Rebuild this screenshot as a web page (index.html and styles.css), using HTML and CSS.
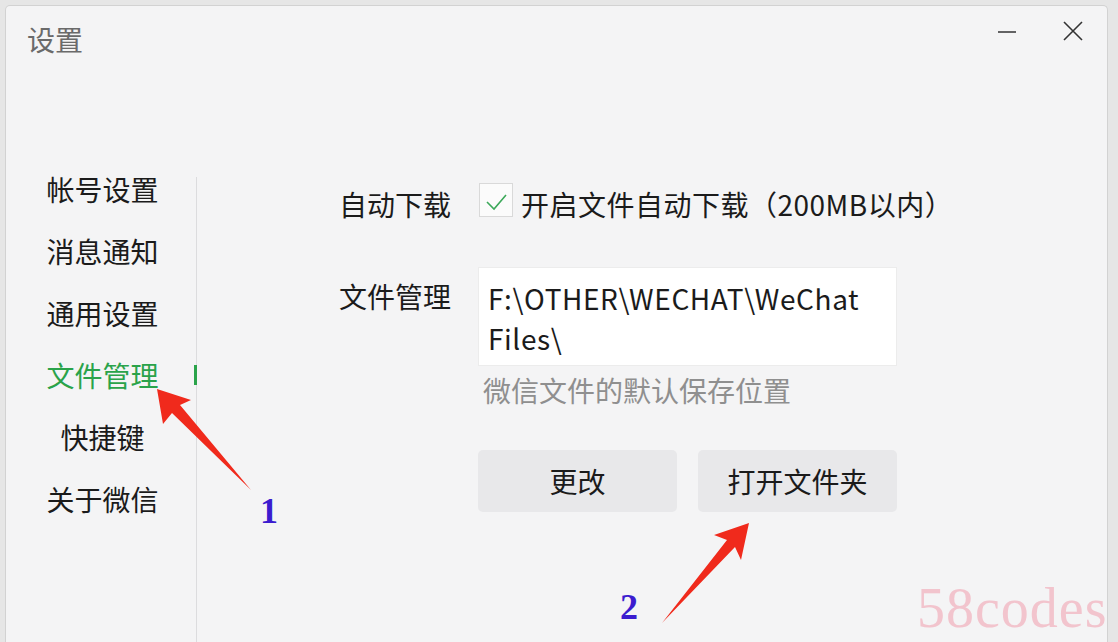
FILE: index.html
```html
<!DOCTYPE html>
<html lang="zh-CN">
<head>
<meta charset="utf-8">
<title>设置</title>
<link rel="stylesheet" href="styles.css">
</head>
<body>
<div class="window">
  <div class="header">
    <div class="title">设置</div>
    <div class="controls">
      <span class="ctl ctl-min"><svg width="20" height="20" viewBox="0 0 20 20"><line x1="1" y1="10" x2="19" y2="10" stroke="#333" stroke-width="1.6"/></svg></span>
      <span class="ctl ctl-close"><svg width="20" height="20" viewBox="0 0 20 20"><path d="M1 1 L19 19 M19 1 L1 19" stroke="#333" stroke-width="1.6" fill="none"/></svg></span>
    </div>
  </div>
  <div class="main">
    <div class="sidebar">
      <ul class="nav">
        <li>帐号设置</li>
        <li>消息通知</li>
        <li>通用设置</li>
        <li class="active">文件管理</li>
        <li>快捷键</li>
        <li>关于微信</li>
      </ul>
      <div class="rail"><span class="indicator"></span></div>
    </div>
    <div class="content">
      <div class="row row-download">
        <div class="label">自动下载</div>
        <div class="check">
          <span class="box"><svg width="34" height="34" viewBox="0 0 34 34"><polyline points="8,19 15,26 27,12" fill="none" stroke="#3ca95a" stroke-width="1.6"/></svg></span>
          <span class="check-text">开启文件自动下载（200MB以内）</span>
        </div>
      </div>
      <div class="row row-files">
        <div class="label label-files">文件管理</div>
        <div class="field">
          <div class="path">F:\OTHER\WECHAT\WeChat Files\</div>
          <div class="hint">微信文件的默认保存位置</div>
          <div class="buttons">
            <button class="btn">更改</button>
            <button class="btn">打开文件夹</button>
          </div>
        </div>
      </div>
    </div>
  </div>
</div>
<svg class="annot" width="1118" height="642" viewBox="0 0 1118 642">
  <polygon points="157,389 191,400 180,405 251,490 172,413 163,424" fill="#f02a1c"/>
  <polygon points="749,523 741,560 735,547 662,623 727,540 714,535" fill="#f02a1c"/>
</svg>
<span class="num num1">1</span>
<span class="num num2">2</span>
<span class="watermark">58codes</span>
</body>
</html>
```
FILE: styles.css
```css
html, body {
  margin: 0;
  padding: 0;
}
body {
  width: 1118px;
  height: 642px;
  overflow: hidden;
  background: #e6e6e6;
  font-family: "Noto Sans CJK SC", "Noto Sans", sans-serif;
  color: #1b1b1b;
  position: relative;
}
.window {
  margin: 5px 0 0 5px;
  width: 1103px;
  height: 637px;
  overflow: hidden;
  background: #f4f4f5;
  border: 1px solid #d2d2d2;
  border-bottom: none;
  border-radius: 5px 5px 0 0;
  box-sizing: border-box;
}
.header {
  display: flex;
  justify-content: space-between;
  padding: 19px 0 0 21px;
  height: 47px;
}
.title {
  font-size: 28px;
  line-height: 28px;
  color: #6a6a6a;
}
.controls {
  display: flex;
  gap: 46px;
  padding-right: 24px;
}
.ctl {
  display: block;
  width: 20px;
  height: 20px;
}
.ctl-min { margin-top: -3px; }
.ctl-close { margin-top: -4px; }
.main {
  display: flex;
  margin-top: 77px;
}
.sidebar {
  display: flex;
  padding-left: 40px;
}
.nav {
  list-style: none;
  margin: 0;
  padding: 9px 0 0 0;
  width: 113px;
  text-align: center;
}
.nav li {
  font-size: 28px;
  line-height: 62px;
  height: 62px;
  white-space: nowrap;
}
.nav li.active {
  color: #2aa34a;
}
.rail {
  position: relative;
  margin-left: 37px;
  margin-top: 28px;
  width: 1px;
  height: 520px;
  background: #dcdcde;
}
.indicator {
  position: absolute;
  left: -2px;
  top: 188px;
  width: 3px;
  height: 20px;
  background: #2aa34a;
}
.content {
  padding: 34px 0 0 142px;
}
.row {
  display: flex;
}
.label {
  width: 139px;
  font-size: 28px;
  line-height: 42px;
  white-space: nowrap;
}
.check {
  display: flex;
  align-items: flex-start;
}
.box {
  display: block;
  width: 34px;
  height: 34px;
  box-sizing: border-box;
  border: 1px solid #d9d9d9;
  background: #fbfbfb;
  margin-left: 1px;
}
.box svg {
  display: block;
  margin: -1px;
}
.check-text {
  margin-left: 8px;
  font-size: 28px;
  line-height: 42px;
  letter-spacing: 0.5px;
  white-space: nowrap;
}
.row-files {
  margin-top: 42px;
}
.label-files {
  margin-top: 8px;
}
.field {
  display: flex;
  flex-direction: column;
}
.path {
  width: 419px;
  height: 99px;
  box-sizing: border-box;
  background: #ffffff;
  border: 1px solid #ececec;
  padding: 10px 10px 0 9px;
  font-size: 28px;
  line-height: 40px;
  letter-spacing: 0.6px;
}
.hint {
  margin: 4px 0 0 5px;
  font-size: 28px;
  line-height: 40px;
  color: #8f8f8f;
  white-space: nowrap;
}
.buttons {
  display: flex;
  gap: 21px;
  margin-top: 40px;
}
.btn {
  width: 199px;
  height: 62px;
  border: none;
  border-radius: 5px;
  background: #e8e8ea;
  font-family: "Noto Sans CJK SC", "Noto Sans", sans-serif;
  font-size: 28px;
  color: #1b1b1b;
  padding: 0;
}
.annot {
  position: absolute;
  left: 0;
  top: 0;
  pointer-events: none;
}
.num {
  position: absolute;
  font-family: "Liberation Serif", serif;
  font-weight: bold;
  font-size: 36px;
  line-height: 36px;
  color: #3b1ccf;
}
.num1 { left: 260px; top: 493px; }
.num2 { left: 620px; top: 589px; }
.watermark {
  position: absolute;
  left: 917px;
  top: 580px;
  font-family: "Liberation Serif", serif;
  font-size: 56px;
  line-height: 56px;
  letter-spacing: 1px;
  color: #f2c4cd;
}
```
